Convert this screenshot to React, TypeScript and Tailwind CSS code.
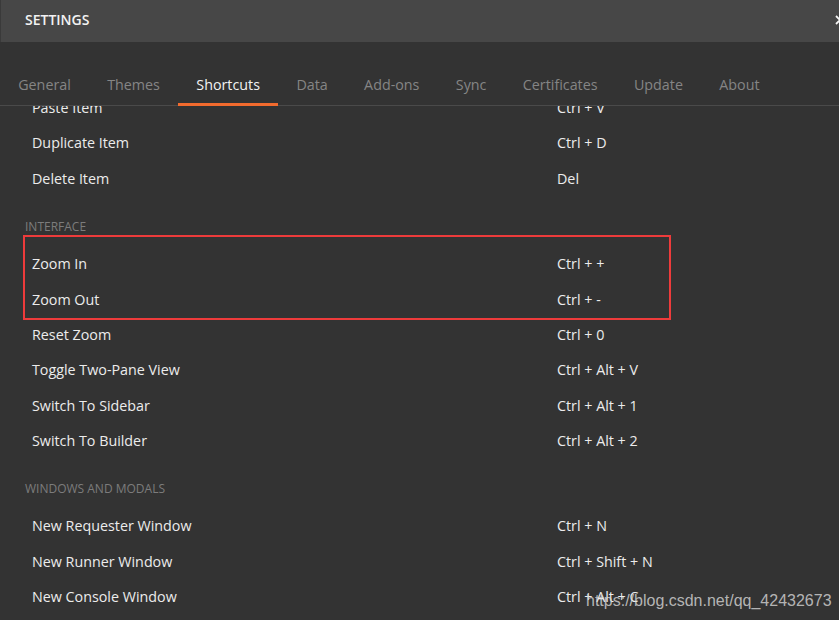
import React from "react";

const tabs = ["General", "Themes", "Shortcuts", "Data", "Add-ons", "Sync", "Certificates", "Update", "About"];

type Row = { label: string; keys: string };

const group1: Row[] = [
  { label: "Paste Item", keys: "Ctrl + V" },
  { label: "Duplicate Item", keys: "Ctrl + D" },
  { label: "Delete Item", keys: "Del" },
];
const group2: Row[] = [
  { label: "Zoom In", keys: "Ctrl + +" },
  { label: "Zoom Out", keys: "Ctrl + -" },
  { label: "Reset Zoom", keys: "Ctrl + 0" },
  { label: "Toggle Two-Pane View", keys: "Ctrl + Alt + V" },
  { label: "Switch To Sidebar", keys: "Ctrl + Alt + 1" },
  { label: "Switch To Builder", keys: "Ctrl + Alt + 2" },
];
const group3: Row[] = [
  { label: "New Requester Window", keys: "Ctrl + N" },
  { label: "New Runner Window", keys: "Ctrl + Shift + N" },
  { label: "New Console Window", keys: "Ctrl + Alt + C" },
];

function Rows({ rows }: { rows: Row[] }) {
  return (
    <div className="flex flex-col">
      {rows.map((r) => (
        <div key={r.label} className="flex h-[35.4px] items-center pl-[32px] text-[14.3px] text-[#ececec]">
          <div className="w-[525px]">{r.label}</div>
          <div>{r.keys}</div>
        </div>
      ))}
    </div>
  );
}

function Heading({ children }: { children: React.ReactNode }) {
  return (
    <div className="pl-[25px] pt-[22.5px] pb-[11.5px] text-[12px] leading-[16px] text-[#7c7c7c] uppercase">
      {children}
    </div>
  );
}

export default function App() {
  return (
    <div className="relative flex h-[620px] w-[839px] flex-col overflow-hidden bg-[#333333] font-['Open_Sans',sans-serif]">
      <div className="flex h-[42px] shrink-0 items-center border-l border-[#3a3a3a] bg-[#474747] pl-[24px] pb-[3px]">
        <span className="text-[14px] font-semibold text-[#f2f2f2]">SETTINGS</span>
        <svg className="-mr-[6px] ml-auto" width="10" height="10" viewBox="0 0 10 10">
          <path d="M1 1L9 9M9 1L1 9" stroke="#f5f5f5" strokeWidth="1.8" />
        </svg>
      </div>
      <div className="flex h-[64px] shrink-0 items-end border-b border-[#4a4a4a]">
        {tabs.map((t) => {
          const active = t === "Shortcuts";
          return (
            <div
              key={t}
              className={`relative px-[18.2px] pt-[6px] pb-[10px] text-[14.3px] leading-[20px] ${
                active ? "text-[#f2f2f2]" : "text-[#858585]"
              }`}
            >
              {t}
              {active && <div className="absolute -bottom-px left-0 right-0 h-[3px] bg-[#f26b2e]" />}
            </div>
          );
        })}
      </div>
      <div className="flex-1 overflow-hidden">
        <div className="-mt-[16px]">
          <Rows rows={group1} />
          <Heading>Interface</Heading>
          <Rows rows={group2} />
          <Heading>Windows and Modals</Heading>
          <Rows rows={group3} />
        </div>
      </div>
      <div className="pointer-events-none absolute left-[23px] top-[235px] h-[85px] w-[648px] border-2 border-[#ee3b3b]" />
      <div className="pointer-events-none absolute left-[586px] top-[591px] font-['Liberation_Sans',sans-serif] text-[16px] leading-[20px] text-[#d8d8d8]/80">
        https://blog.csdn.net/qq_42432673
      </div>
    </div>
  );
}
